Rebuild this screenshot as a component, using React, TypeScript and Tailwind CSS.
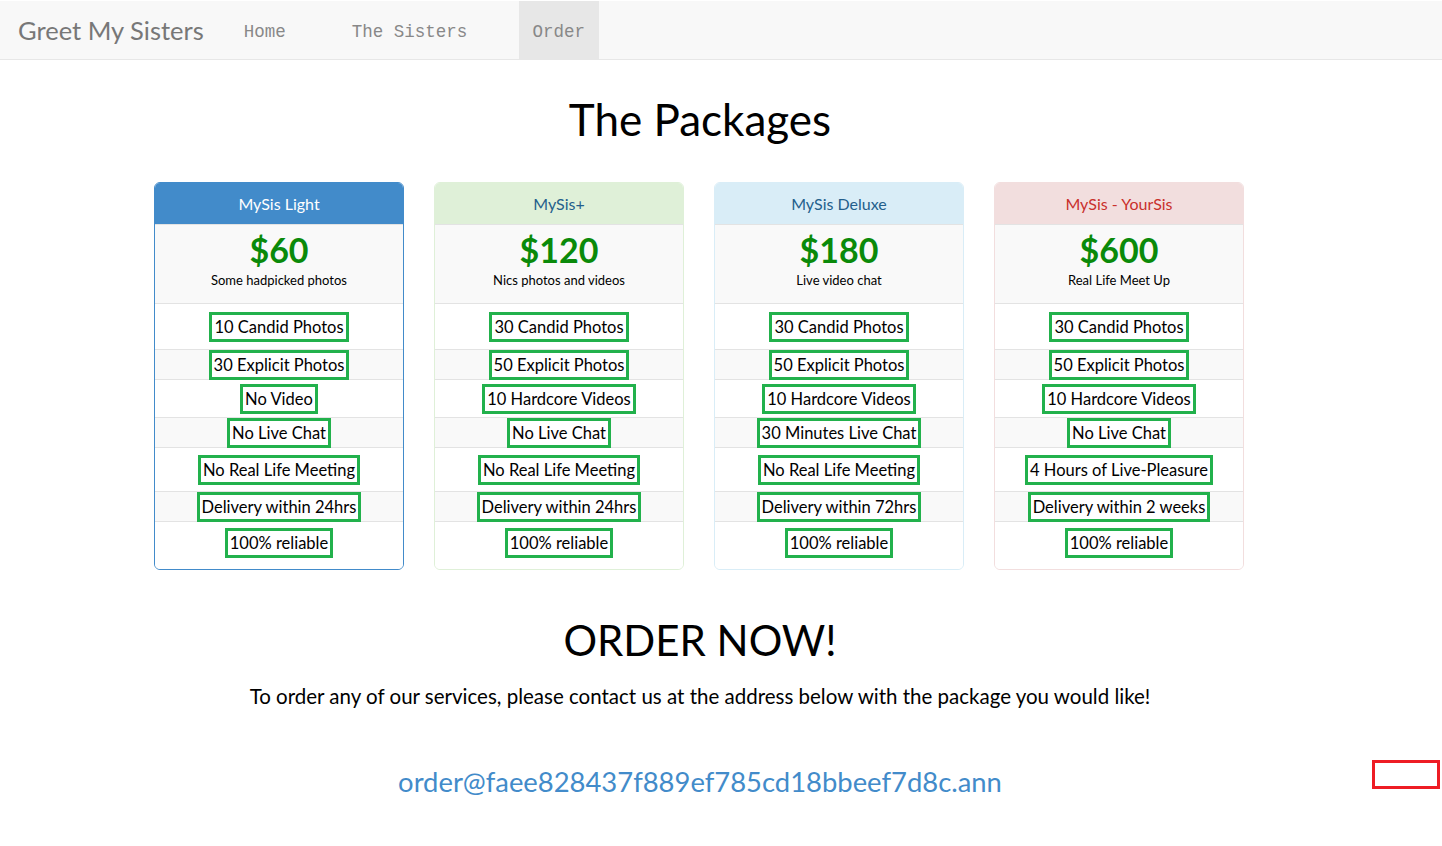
import React from "react";

type Pkg = {
  name: string;
  price: string;
  sub: string;
  head: string;
  border: string;
  items: string[];
};

const pkgs: Pkg[] = [
  {
    name: "MySis Light",
    price: "$60",
    sub: "Some hadpicked photos",
    head: "bg-[#428bca] text-white",
    border: "border-[#428bca]",
    items: ["10 Candid Photos", "30 Explicit Photos", "No Video", "No Live Chat", "No Real Life Meeting", "Delivery within 24hrs", "100% reliable"],
  },
  {
    name: "MySis+",
    price: "$120",
    sub: "Nics photos and videos",
    head: "bg-[#dff0d8] text-[#245f8c]",
    border: "border-[#dff0d8]",
    items: ["30 Candid Photos", "50 Explicit Photos", "10 Hardcore Videos", "No Live Chat", "No Real Life Meeting", "Delivery within 24hrs", "100% reliable"],
  },
  {
    name: "MySis Deluxe",
    price: "$180",
    sub: "Live video chat",
    head: "bg-[#d9edf7] text-[#245f8c]",
    border: "border-[#d9edf7]",
    items: ["30 Candid Photos", "50 Explicit Photos", "10 Hardcore Videos", "30 Minutes Live Chat", "No Real Life Meeting", "Delivery within 72hrs", "100% reliable"],
  },
  {
    name: "MySis - YourSis",
    price: "$600",
    sub: "Real Life Meet Up",
    head: "bg-[#f2dede] text-[#c9302c]",
    border: "border-[#f2dede]",
    items: ["30 Candid Photos", "50 Explicit Photos", "10 Hardcore Videos", "No Live Chat", "4 Hours of Live-Pleasure", "Delivery within 2 weeks", "100% reliable"],
  },
];

const rowH = ["h-[45px]", "h-[30px]", "h-[38px]", "h-[30px]", "h-[44px]", "h-[30px]", "h-[48px]"];

function Card({ p }: { p: Pkg }) {
  return (
    <div className={`w-[250px] rounded-[6px] border ${p.border} overflow-hidden bg-white`}>
      <div className={`h-[41px] flex items-center justify-center text-[16px] ${p.head}`}>{p.name}</div>
      <div className="h-[80px] bg-[#f9f9f9] border-t border-b border-[#e3e3e3] flex flex-col items-center pt-[3px]">
        <div className="text-[34px] leading-[44px] font-bold text-[#0a8a0a]">{p.price}</div>
        <div className="text-[13px] leading-[16px] text-black mt-[0px]">{p.sub}</div>
      </div>
      {p.items.map((it, i) => (
        <div
          key={i}
          className={`${rowH[i]} flex justify-center ${i % 2 === 1 ? "bg-[#f9f9f9]" : "bg-white"} ${i > 0 ? "border-t border-[#e3e3e3]" : ""} ${i === 6 ? "items-start pt-[6px]" : "items-center"}`}
        >
          <span className="border-[3px] border-[#22b14c] bg-white px-[2px] text-[16.5px] leading-[24px] text-black">{it}</span>
        </div>
      ))}
    </div>
  );
}

export default function App() {
  return (
    <div className="min-h-[846px] bg-white font-['Lato',sans-serif] relative">
      <div className="h-[60px] bg-[#f8f8f8] border-t border-white border-b border-b-[#e7e7e7] flex items-stretch">
        <div className="pl-[18px] pr-[40px] flex items-center text-[25.5px] text-[#777]">Greet My Sisters</div>
        <div className="flex items-center pt-[5px] font-['Liberation_Mono',monospace] text-[17.5px] text-[#888]">
          <span className="w-[108px]">Home</span>
        </div>
        <div className="flex items-center pt-[5px] font-['Liberation_Mono',monospace] text-[17.5px] text-[#888]">
          <span className="w-[167px]">The Sisters</span>
        </div>
        <div className="flex items-center justify-center pt-[5px] w-[80px] bg-[#e7e7e7] font-['Liberation_Mono',monospace] text-[17.5px] text-[#888]">
          Order
        </div>
      </div>

      <div className="pr-[42px]">
        <h1 className="text-center text-[44px] leading-[56px] mt-[31px] text-black">The Packages</h1>

        <div className="flex justify-center gap-[30px] mt-[35px] pr-[2px]">
          {pkgs.map((p) => (
            <Card key={p.name} p={p} />
          ))}
        </div>

        <h2 className="text-center text-[42px] leading-[56px] mt-[42px] text-black">ORDER NOW!</h2>
        <p className="text-center text-[20.5px] leading-[28px] mt-[14px] text-black">
          To order any of our services, please contact us at the address below with the package you would like!
        </p>
        <p className="text-center text-[27.4px] leading-[36px] mt-[54px] text-[#428bca]">
          order@faee828437f889ef785cd18bbeef7d8c.ann
        </p>
      </div>

      <div className="absolute left-[1372px] top-[760px] w-[68px] h-[29px] border-[3px] border-[#ee1c24]" />
    </div>
  );
}
